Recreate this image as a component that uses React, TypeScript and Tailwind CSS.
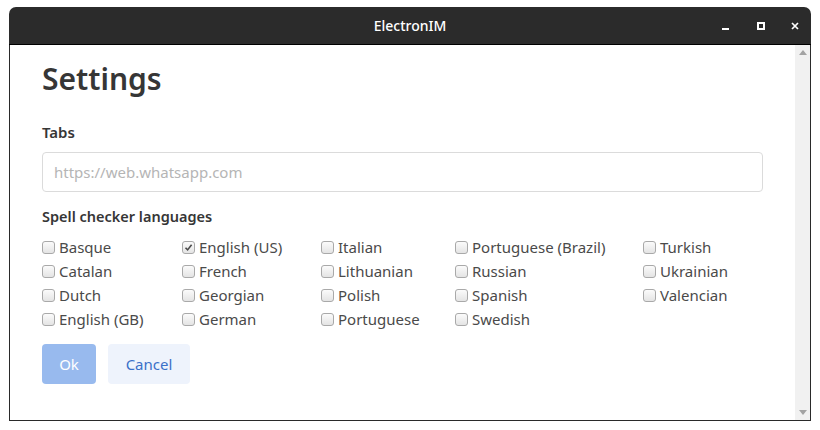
const COLUMNS: { name: string; checked?: boolean }[][] = [
  [{ name: "Basque" }, { name: "Catalan" }, { name: "Dutch" }, { name: "English (GB)" }],
  [{ name: "English (US)", checked: true }, { name: "French" }, { name: "Georgian" }, { name: "German" }],
  [{ name: "Italian" }, { name: "Lithuanian" }, { name: "Polish" }, { name: "Portuguese" }],
  [{ name: "Portuguese (Brazil)" }, { name: "Russian" }, { name: "Spanish" }, { name: "Swedish" }],
  [{ name: "Turkish" }, { name: "Ukrainian" }, { name: "Valencian" }],
];

const COL_WIDTHS = ["w-[140px]", "w-[139px]", "w-[134px]", "w-[188px]", "w-[120px]"];

function Box({ checked }: { checked?: boolean }) {
  return (
    <span className="w-[13px] h-[13px] rounded-[3px] border border-[#a9a9a9] bg-gradient-to-b from-[#fbfbfb] to-[#e4e4e4] flex items-center justify-center shrink-0">
      {checked && (
        <svg width="9" height="9" viewBox="0 0 9 9">
          <path d="M1.5 4.8 L3.6 6.9 L7.6 1.8" fill="none" stroke="#4a4a4a" strokeWidth="1.6" />
        </svg>
      )}
    </span>
  );
}

export default function App() {
  return (
    <div className="w-[820px] h-[430px] bg-white pt-[7px] pl-[9px] overflow-hidden" style={{ fontFamily: '"Noto Sans", sans-serif' }}>
      <div className="w-[802px] h-[414px] flex flex-col">
        {/* Title bar */}
        <div className="h-[38px] bg-[#2b2b2b] rounded-t-[7px] border-b border-black flex items-center relative shrink-0">
          <div className="flex-1 text-center text-white text-[14px] font-medium">ElectronIM</div>
          <div className="absolute right-0 top-0 h-full flex items-center">
            <span className="w-[36px] flex justify-center pt-[6px]">
              <span className="block w-[7px] h-[2px] bg-white" />
            </span>
            <span className="w-[36px] flex justify-center">
              <span className="block w-[8px] h-[8px] border-2 border-white" />
            </span>
            <span className="w-[32px] flex justify-center">
              <svg width="8" height="8" viewBox="0 0 8 8">
                <path d="M1 1 L7 7 M7 1 L1 7" stroke="white" strokeWidth="1.7" />
              </svg>
            </span>
          </div>
        </div>

        {/* Body */}
        <div className="flex-1 flex border-x border-b border-[#2a2a2a] min-h-0">
          <div className="flex-1 pl-[32px] pr-[32px] pt-[14px] text-[#4a4a4a]">
            <h1 className="text-[30px] font-semibold text-[#363636] leading-[40px]">Settings</h1>

            <div className="mt-[23px] text-[15px] font-semibold text-[#363636] leading-[20px]">Tabs</div>
            <input
              className="mt-[10px] w-[721px] h-[40px] rounded-[4px] border border-[#dbdbdb] px-[11px] text-[15px] placeholder:text-[#b5b5b5] outline-none"
              placeholder="https://web.whatsapp.com"
            />

            <div className="mt-[14px] text-[14.5px] font-semibold text-[#363636] leading-[20px]">Spell checker languages</div>
            <div className="mt-[9px] flex">
              {COLUMNS.map((col, i) => (
                <div key={i} className={`${COL_WIDTHS[i]} flex flex-col`}>
                  {col.map((l) => (
                    <label key={l.name} className="h-[24px] flex items-center gap-[4px] text-[15px] text-[#4a4a4a]">
                      <Box checked={l.checked} />
                      <span>{l.name}</span>
                    </label>
                  ))}
                </div>
              ))}
            </div>

            <div className="mt-[13px] flex gap-[12px]">
              <button className="w-[54px] h-[40px] rounded-[4px] bg-[#98baee] text-white text-[15px]">Ok</button>
              <button className="w-[82px] h-[40px] rounded-[4px] bg-[#eef3fc] text-[#3b70c8] text-[15px]">Cancel</button>
            </div>
          </div>

          {/* Scrollbar */}
          <div className="w-[15px] bg-[#f1f1f1] flex flex-col items-center justify-between py-[5px]">
            <svg width="8" height="5" viewBox="0 0 8 5">
              <path d="M0 5 L4 0 L8 5 Z" fill="#a3a3a3" />
            </svg>
            <svg width="8" height="5" viewBox="0 0 8 5">
              <path d="M0 0 L4 5 L8 0 Z" fill="#a3a3a3" />
            </svg>
          </div>
        </div>
      </div>
    </div>
  );
}
